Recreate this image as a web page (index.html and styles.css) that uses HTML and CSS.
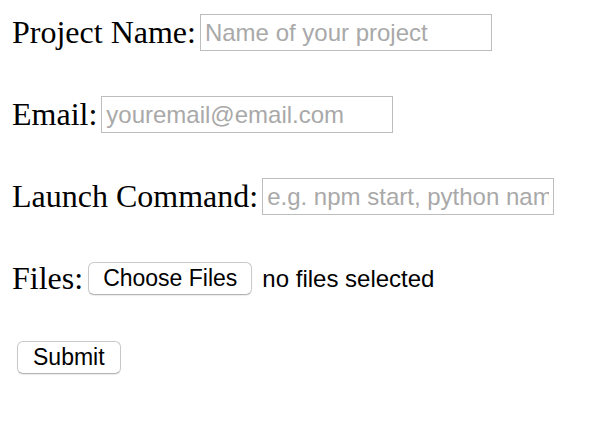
FILE: index.html
```html
<!DOCTYPE html>
<html>
<head>
<meta charset="utf-8">
<link rel="stylesheet" href="styles.css">
</head>
<body>
<form class="form">
  <div class="row">
    <label class="label">Project Name:</label>
    <input class="field" type="text" placeholder="Name of your project">
  </div>
  <div class="row">
    <label class="label">Email:</label>
    <input class="field" type="text" placeholder="youremail@email.com">
  </div>
  <div class="row">
    <label class="label">Launch Command:</label>
    <input class="field" type="text" placeholder="e.g. npm start, python name.py">
  </div>
  <div class="row">
    <label class="label">Files:</label>
    <button type="button" class="btn btn-file">Choose Files</button>
    <span class="file-status">no files selected</span>
  </div>
  <div class="row row-submit">
    <button type="button" class="btn btn-submit">Submit</button>
  </div>
</form>
</body>
</html>
```
FILE: styles.css
```css
html, body {
  margin: 0;
  padding: 0;
  background: #ffffff;
}
body {
  font-family: "Liberation Serif", "Times New Roman", serif;
  color: #000;
}
.form {
  padding: 14px 0 0 12px;
}
.row {
  display: flex;
  align-items: center;
  height: 37px;
  margin-bottom: 45px;
}
.row-submit {
  margin-top: -3px;
}
.label {
  font-size: 32px;
  line-height: 37px;
  margin-right: 4px;
  white-space: nowrap;
}
.field {
  box-sizing: border-box;
  width: 292px;
  height: 37px;
  border: 1px solid #bdbdbd;
  border-radius: 0;
  padding: 0 4px;
  margin: 0;
  font-family: "Liberation Sans", Arial, sans-serif;
  font-size: 24px;
  color: #000;
  outline: none;
  background: #fff;
}
.field::placeholder {
  color: #a9a9a9;
}
.btn {
  box-sizing: border-box;
  height: 33px;
  padding: 0 15px;
  margin: 0;
  background: #fff;
  border: 1px solid #c9c9c9;
  border-bottom-color: #b4b4b4;
  border-radius: 6px;
  box-shadow: 0 1px 1px rgba(0,0,0,0.08);
  font-family: "Liberation Sans", Arial, sans-serif;
  font-size: 23px;
  color: #000;
  line-height: 31px;
}
.btn-file {
  margin-left: 1px;
  padding: 0 14px;
}
.btn-submit {
  margin-left: 5px;
}
.file-status {
  margin-left: 10px;
  font-family: "Liberation Sans", Arial, sans-serif;
  font-size: 24px;
}
```
